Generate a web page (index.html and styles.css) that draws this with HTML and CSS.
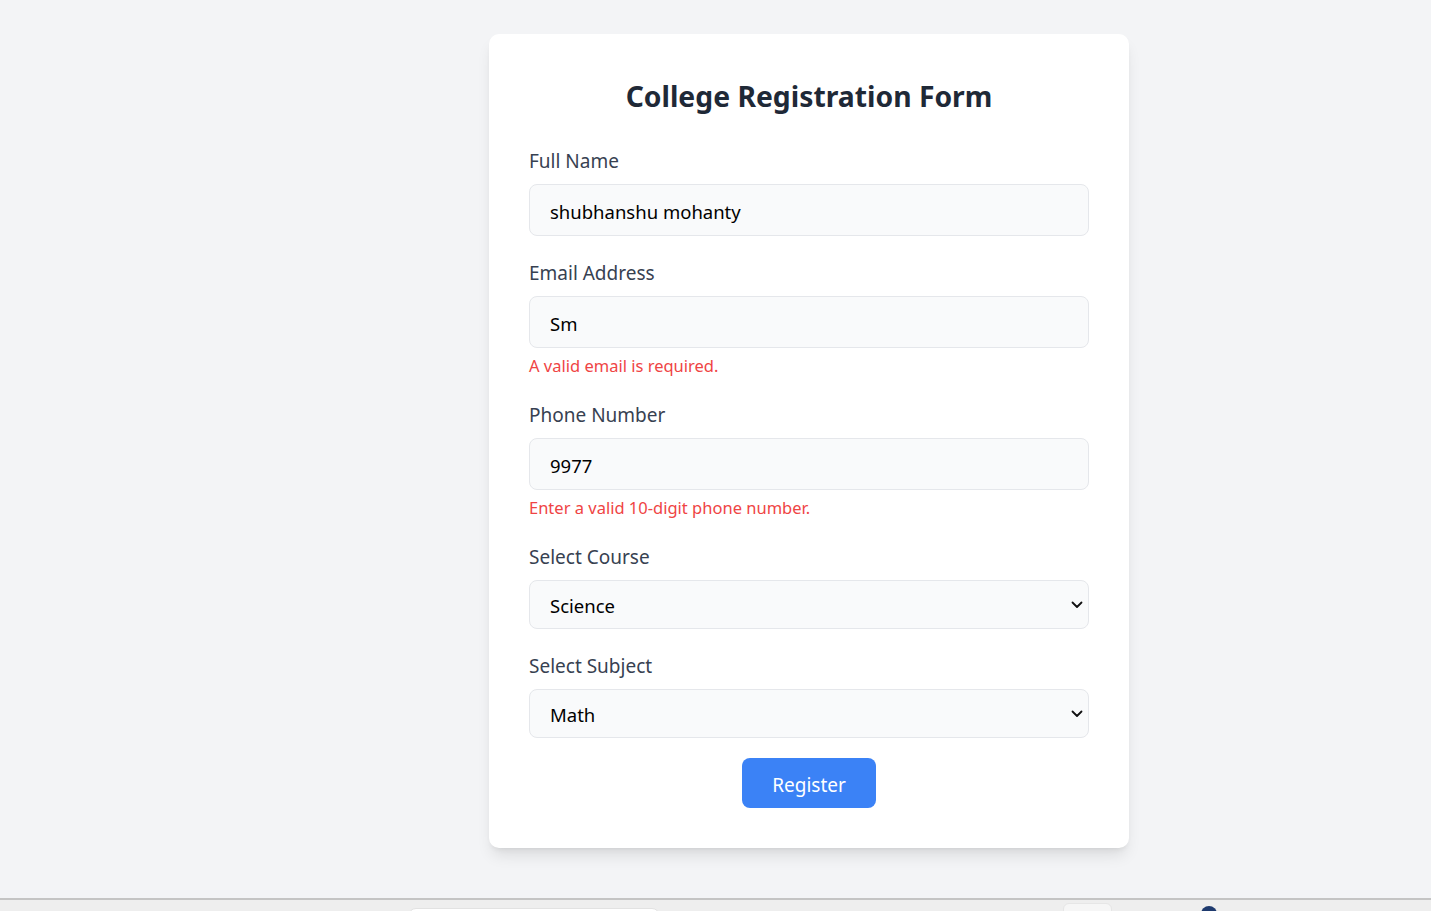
FILE: index.html
```html
<!DOCTYPE html>
<html lang="en">
<head>
<meta charset="utf-8">
<title>College Registration Form</title>
<link rel="stylesheet" href="styles.css">
</head>
<body>
<div class="page">
  <main class="main">
    <form class="card">
      <h2 class="title">College Registration Form</h2>
      <div class="field">
        <label class="label">Full Name</label>
        <input class="input" type="text" value="shubhanshu mohanty">
      </div>
      <div class="field">
        <label class="label">Email Address</label>
        <input class="input" type="text" value="Sm">
        <p class="error">A valid email is required.</p>
      </div>
      <div class="field">
        <label class="label">Phone Number</label>
        <input class="input" type="text" value="9977">
        <p class="error">Enter a valid 10-digit phone number.</p>
      </div>
      <div class="field">
        <label class="label">Select Course</label>
        <div class="select-wrap">
          <select class="select"><option>Science</option></select>
          <svg class="chevron" width="12" height="8" viewBox="0 0 12 8"><path d="M1.5 1.5 L6 6 L10.5 1.5" fill="none" stroke="#111" stroke-width="1.8" stroke-linecap="round" stroke-linejoin="round"/></svg>
        </div>
      </div>
      <div class="field">
        <label class="label">Select Subject</label>
        <div class="select-wrap">
          <select class="select"><option>Math</option></select>
          <svg class="chevron" width="12" height="8" viewBox="0 0 12 8"><path d="M1.5 1.5 L6 6 L10.5 1.5" fill="none" stroke="#111" stroke-width="1.8" stroke-linecap="round" stroke-linejoin="round"/></svg>
        </div>
      </div>
      <div class="actions">
        <button class="button" type="button">Register</button>
      </div>
    </form>
  </main>
  <div class="bottombar">
    <div class="bb-tab"></div>
    <div class="bb-box"></div>
    <div class="bb-dot"></div>
  </div>
</div>
</body>
</html>
```
FILE: styles.css
```css
* { box-sizing: border-box; }
html, body { margin: 0; padding: 0; }
body {
  background: #f3f4f6;
  font-family: "Noto Sans", "Open Sans", "Liberation Sans", sans-serif;
  color: #374151;
}
.page {
  height: 100vh;
  display: flex;
  flex-direction: column;
  overflow: hidden;
}
.main {
  flex: 1;
  padding: 34px 0 0 489px;
}
.card {
  width: 640px;
  background: #fff;
  border-radius: 10px;
  padding: 40px;
  box-shadow: 0 10px 15px -3px rgba(0,0,0,0.1), 0 4px 6px -4px rgba(0,0,0,0.1);
}
.title {
  margin: 0 0 28px;
  padding-top: 2px;
  text-align: center;
  font-size: 28.3px;
  line-height: 40px;
  font-weight: 700;
  color: #1f2937;
}
.field { margin-bottom: 20px; }
.label {
  display: block;
  font-size: 19px;
  line-height: 30px;
  padding-top: 2px;
  margin-bottom: 8px;
  color: #374151;
}
.input, .select {
  display: block;
  width: 100%;
  font-family: inherit;
  font-size: 18.5px;
  color: #000;
  background: #f9fafb;
  border: 1px solid #e5e7eb;
  border-radius: 8px;
  padding: 3px 20px 0;
  outline: none;
}
.input { height: 52px; }
.select-wrap { position: relative; }
.select {
  height: 49px;
  padding-top: 2px;
  appearance: none;
  -webkit-appearance: none;
}
.chevron {
  position: absolute;
  right: 6px;
  top: 21px;
}
.error {
  margin: 5px 0 0;
  padding-top: 1px;
  font-size: 16.5px;
  line-height: 24px;
  color: #ef4444;
}
.actions {
  display: flex;
  justify-content: center;
}
.button {
  font-family: inherit;
  font-size: 19px;
  line-height: 30px;
  height: 50px;
  padding: 3px 30px 0;
  background: #3b82f6;
  color: #fff;
  border: none;
  border-radius: 8px;
}
.bottombar {
  height: 13px;
  flex: none;
  background: #eeeeee;
  border-top: 2px solid #c4c4c4;
  position: relative;
  display: flex;
}
.bb-tab {
  margin: 8px 0 0 408px;
  width: 252px;
  height: 10px;
  background: #fff;
  border: 1px solid #e2e2e2;
  border-radius: 8px 8px 0 0;
}
.bb-box {
  margin: 3px 0 0 403px;
  width: 49px;
  height: 14px;
  background: #f6f6f6;
  border: 1px solid #e6e6e6;
  border-radius: 6px 6px 0 0;
}
.bb-dot {
  margin: 6px 0 0 89px;
  width: 16px;
  height: 16px;
  border-radius: 50%;
  background: #1e3a6e;
}
```
